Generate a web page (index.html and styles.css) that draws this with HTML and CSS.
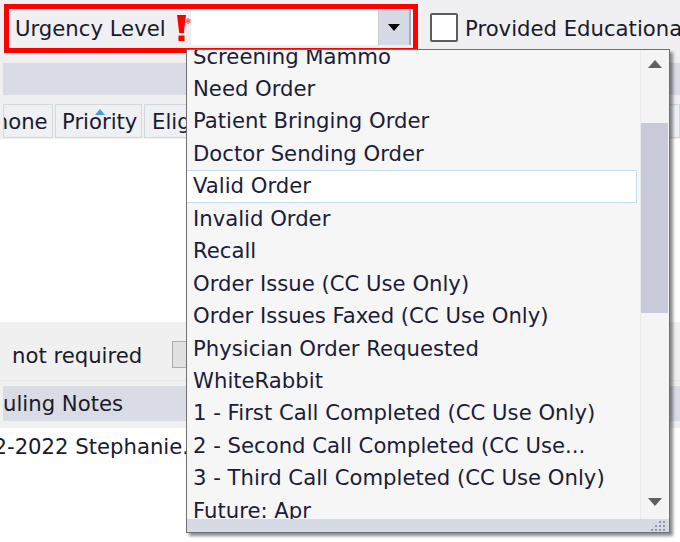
FILE: index.html
```html
<!DOCTYPE html>
<html>
<head>
<meta charset="utf-8">
<link rel="stylesheet" href="styles.css">
</head>
<body>
<div class="page">
  <div class="toolbar">
    <div class="urgency">
      <span class="label">Urgency Level</span>
      <span class="req">
        <svg width="14" height="28" viewBox="0 0 14 28">
          <polygon points="0,0 9,0 6.8,18 2.2,18" fill="#f00"/>
          <rect x="1.5" y="20.5" width="6" height="5.5" fill="#f00"/>
          <g stroke="#ff5a5a" stroke-width="1.3">
            <line x1="11" y1="3" x2="11" y2="9"/>
            <line x1="8.4" y1="4.5" x2="13.6" y2="7.5"/>
            <line x1="8.4" y1="7.5" x2="13.6" y2="4.5"/>
          </g>
        </svg>
      </span>
      <span class="combo-input"></span>
      <span class="combo-btn"><span class="down-tri"></span></span>
    </div>
    <span class="checkbox"></span>
    <span class="cb-label">Provided Educational</span>
  </div>

  <div class="band band-top"></div>
  <div class="spacer9"></div>
  <div class="header-row">
    <div class="hcell hcell-phone"><span class="clip-phone">Phone</span></div>
    <div class="hcell hcell-priority">Priority<span class="sort-up"></span></div>
    <div class="hcell hcell-elig">Elig</div>
  </div>
  <div class="white-area"></div>
  <div class="opts">
    <span class="opts-text">not required</span>
    <span class="opts-btn"></span>
  </div>
  <div class="divider"></div>
  <div class="band band-notes"><span class="clip-notes">Scheduling Notes</span></div>
  <div class="divider2"></div>
  <div class="notes-row"><span class="clip-date">2-2022 Stephanie.'</span></div>

  <div class="dropdown">
    <div class="list-view">
      <div class="items">
        <div class="item">Screening Mammo</div>
        <div class="item">Need Order</div>
        <div class="item">Patient Bringing Order</div>
        <div class="item">Doctor Sending Order</div>
        <div class="item item-hot">Valid Order</div>
        <div class="item">Invalid Order</div>
        <div class="item">Recall</div>
        <div class="item">Order Issue (CC Use Only)</div>
        <div class="item">Order Issues Faxed (CC Use Only)</div>
        <div class="item">Physician Order Requested</div>
        <div class="item">WhiteRabbit</div>
        <div class="item">1 - First Call Completed (CC Use Only)</div>
        <div class="item">2 - Second Call Completed (CC Use...</div>
        <div class="item">3 - Third Call Completed (CC Use Only)</div>
        <div class="item">Future: Apr</div>
      </div>
      <div class="scrollbar">
        <div class="sb-up"><span class="tri-up"></span></div>
        <div class="sb-track"><div class="sb-thumb"></div></div>
        <div class="sb-down"><span class="tri-down"></span></div>
      </div>
    </div>
    <div class="grip">
      <svg width="18" height="11" viewBox="0 0 18 11">
        <g fill="#8d98ab">
          <rect x="14" y="1" width="2" height="2"/>
          <rect x="10" y="1" width="2" height="2"/>
          <rect x="14" y="5" width="2" height="2"/>
          <rect x="10" y="5" width="2" height="2"/>
          <rect x="6" y="5" width="2" height="2"/>
          <rect x="14" y="9" width="2" height="2"/>
          <rect x="10" y="9" width="2" height="2"/>
          <rect x="6" y="9" width="2" height="2"/>
          <rect x="2" y="9" width="2" height="2"/>
        </g>
      </svg>
    </div>
  </div>
</div>
</body>
</html>
```

FILE: styles.css
```css
html, body {
  margin: 0;
  padding: 0;
}
body {
  width: 680px;
  height: 542px;
  overflow: hidden;
  background: #f0f0f0;
  font-family: "DejaVu Sans", "Liberation Sans", sans-serif;
  font-size: 21.2px;
  color: #1a1a2c;
}
.page {
  position: relative;
  width: 680px;
  height: 542px;
  overflow: hidden;
}
.toolbar {
  height: 63px;
  box-sizing: border-box;
  padding: 4px 0 0 4px;
  display: flex;
  align-items: flex-start;
  white-space: nowrap;
  background: #f0f0f2;
}
.urgency {
  width: 414px;
  height: 49px;
  box-sizing: border-box;
  border: 5px solid #ff0000;
  display: flex;
  align-items: flex-start;
  flex: none;
  background: #f0f0f2;
}
.label {
  flex: none;
  width: 168px;
  box-sizing: border-box;
  padding-left: 6px;
  line-height: 39px;
  height: 39px;
  overflow: hidden;
}
.req {
  flex: none;
  margin-top: 6px;
  width: 14px;
  height: 28px;
  display: block;
}
.req svg {
  display: block;
}
.combo-input {
  width: 187px;
  height: 35px;
  margin-top: 1px;
  background: #fff;
}
.combo-btn {
  width: 33px;
  height: 35px;
  margin-top: 1px;
  box-sizing: border-box;
  background: #d5dae4;
  border-left: 1px solid #c6ccd8;
  border-right: 2px solid #a3acbd;
  display: flex;
  align-items: center;
  justify-content: center;
}
.down-tri {
  width: 0;
  height: 0;
  border-left: 6px solid transparent;
  border-right: 6px solid transparent;
  border-top: 7px solid #000;
}
.checkbox {
  flex: none;
  margin-left: 12px;
  margin-top: 9px;
  width: 28px;
  height: 29px;
  box-sizing: border-box;
  border: 2px solid #5c5c5c;
  border-radius: 2px;
  background: #fff;
}
.cb-label {
  margin-left: 7px;
  line-height: 49px;
  height: 49px;
}
.band {
  margin-left: 3px;
  background: #d9dce4;
  overflow: hidden;
  white-space: nowrap;
}
.band-top {
  height: 32px;
}
.spacer9 {
  height: 9px;
}
.header-row {
  height: 35px;
  display: flex;
  padding-left: 3px;
  gap: 2px;
  white-space: nowrap;
}
.hcell {
  position: relative;
  box-sizing: border-box;
  height: 34px;
  line-height: 34px;
  background: #eef0f4;
  border: 1px solid #d3d7df;
  overflow: hidden;
}
.hcell-phone {
  width: 50px;
}
.clip-phone {
  margin-left: -22px;
}
.hcell-priority {
  width: 87px;
  padding-left: 6px;
}
.sort-up {
  position: absolute;
  left: 39px;
  top: 4px;
  width: 0;
  height: 0;
  border-left: 5px solid transparent;
  border-right: 5px solid transparent;
  border-bottom: 6px solid #4a9be0;
}
.hcell-elig {
  flex: 1;
  padding-left: 7px;
}
.white-area {
  height: 183px;
  background: #fff;
}
.opts {
  height: 58px;
  display: flex;
  align-items: flex-start;
  white-space: nowrap;
}
.opts-text {
  margin-left: 12px;
  margin-top: 22px;
  line-height: 24px;
}
.opts-btn {
  margin-left: 30px;
  margin-top: 19px;
  width: 60px;
  height: 27px;
  box-sizing: border-box;
  background: #e1e1e1;
  border: 1px solid #adadad;
}
.divider {
  height: 6px;
  border-top: 1px solid #e2e4ea;
  box-sizing: border-box;
}
.band-notes {
  height: 35px;
  line-height: 35px;
}
.clip-notes {
  margin-left: -65px;
}
.divider2 {
  height: 7px;
}
.notes-row {
  height: 114px;
  background: #fff;
  padding-top: 3px;
  box-sizing: border-box;
  line-height: 32px;
  white-space: nowrap;
  overflow: hidden;
}
.clip-date {
  margin-left: -6.5px;
}
.dropdown {
  position: absolute;
  left: 186px;
  top: 49px;
  width: 484px;
  height: 484px;
  box-sizing: border-box;
  border: 1px solid #707070;
  background: #f6f6f6;
  box-shadow: 3px 3px 3px rgba(0, 0, 0, 0.45);
  display: flex;
  flex-direction: column;
}
.list-view {
  height: 469px;
  display: flex;
  overflow: hidden;
}
.items {
  width: 453px;
  margin-top: -9.4px;
  color: #1c1c38;
}
.item {
  height: 32.45px;
  line-height: 32.45px;
  padding-left: 6px;
  white-space: nowrap;
  box-sizing: border-box;
}
.item-hot {
  background: #fff;
  border: 1px solid #c6daf0;
  border-left: none;
  margin-right: 3px;
  line-height: 30.45px;
}
.scrollbar {
  width: 29px;
  background: #f4f4f4;
  border-left: 1px solid #e9e9e9;
  box-sizing: border-box;
  display: flex;
  flex-direction: column;
}
.sb-up {
  height: 28px;
  display: flex;
  align-items: center;
  justify-content: center;
}
.tri-up {
  width: 0;
  height: 0;
  border-left: 7px solid transparent;
  border-right: 7px solid transparent;
  border-bottom: 8px solid #606060;
}
.sb-track {
  flex: 1;
  padding-top: 45px;
}
.sb-thumb {
  height: 190px;
  margin-right: 1px;
  background: #c8cad9;
}
.sb-down {
  height: 34px;
  display: flex;
  align-items: center;
  justify-content: center;
}
.tri-down {
  width: 0;
  height: 0;
  border-left: 7px solid transparent;
  border-right: 7px solid transparent;
  border-top: 8px solid #606060;
}
.grip {
  flex: 1;
  background: #d5dae4;
  display: flex;
  justify-content: flex-end;
  align-items: center;
  padding-right: 2px;
}
.grip svg {
  display: block;
}
```
